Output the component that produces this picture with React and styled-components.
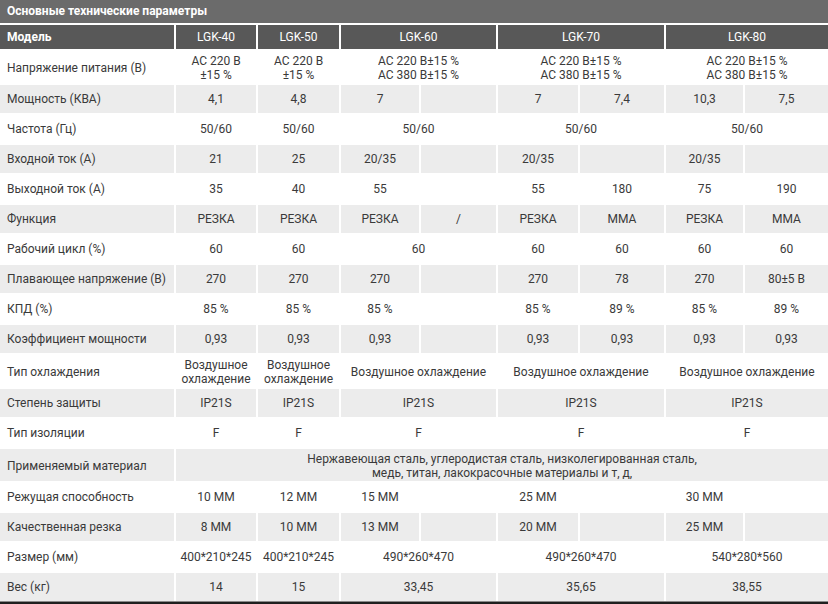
import React from "react";
import styled, { createGlobalStyle } from "styled-components";

const GlobalStyle = createGlobalStyle`
  html, body {
    margin: 0;
    padding: 0;
    background: #ffffff;
  }
  body {
    font-family: Roboto, "Noto Sans", "Liberation Sans", sans-serif;
  }
`;

// column widths: label, LGK-40, LGK-50, LGK-60 (a, b), LGK-70 (a, b), LGK-80 (a, b)
const COLS = [174, 80, 81, 78, 75, 80, 84, 77, 83];

const AC2 = ["AC 220 В±15 %", "AC 380 В±15 %"];

const rows = [
  ["Напряжение питания (В)", [[["AC 220 В", "±15 %"]], [["AC 220 В", "±15 %"]], [AC2, 2], [AC2, 2], [AC2, 2]]],
  ["Мощность (КВА)", [["4,1"], ["4,8"], ["7"], [""], ["7"], ["7,4"], ["10,3"], ["7,5"]]],
  ["Частота (Гц)", [["50/60"], ["50/60"], ["50/60", 2], ["50/60", 2], ["50/60", 2]]],
  ["Входной ток (А)", [["21"], ["25"], ["20/35"], [""], ["20/35"], [""], ["20/35"], [""]]],
  ["Выходной ток (А)", [["35"], ["40"], ["55"], [""], ["55"], ["180"], ["75"], ["190"]]],
  ["Функция", [["РЕЗКА"], ["РЕЗКА"], ["РЕЗКА"], ["/"], ["РЕЗКА"], ["ММА"], ["РЕЗКА"], ["ММА"]]],
  ["Рабочий цикл (%)", [["60"], ["60"], ["60", 2], ["60"], ["60"], ["60"], ["60"]]],
  ["Плавающее напряжение (В)", [["270"], ["270"], ["270"], [""], ["270"], ["78"], ["270"], ["80±5 В"]]],
  ["КПД (%)", [["85 %"], ["85 %"], ["85 %"], [""], ["85 %"], ["89 %"], ["85 %"], ["89 %"]]],
  ["Коэффициент мощности", [["0,93"], ["0,93"], ["0,93"], [""], ["0,93"], ["0,93"], ["0,93"], ["0,93"]]],
  ["Тип охлаждения", [[["Воздушное", "охлаждение"]], [["Воздушное", "охлаждение"]], ["Воздушное охлаждение", 2], ["Воздушное охлаждение", 2], ["Воздушное охлаждение", 2]]],
  ["Степень защиты", [["IP21S"], ["IP21S"], ["IP21S", 2], ["IP21S", 2], ["IP21S", 2]]],
  ["Тип изоляции", [["F"], ["F"], ["F", 2], ["F", 2], ["F", 2]]],
  ["Применяемый материал", [[["Нержавеющая сталь, углеродистая сталь, низколегированная сталь,", "медь, титан, лакокрасочные материалы и т, д,"], 8]]],
  ["Режущая способность", [["10 ММ"], ["12 ММ"], ["15 ММ"], [""], ["25 ММ"], [""], ["30 ММ"], [""]]],
  ["Качественная резка", [["8 ММ"], ["10 ММ"], ["13 ММ"], [""], ["20 ММ"], [""], ["25 ММ"], [""]]],
  ["Размер (мм)", [["400*210*245"], ["400*210*245"], ["490*260*470", 2], ["490*260*470", 2], ["540*280*560", 2]]],
  ["Вес (кг)", [["14"], ["15"], ["33,45", 2], ["35,65", 2], ["38,55", 2]]],
];

const Page = styled.div`
  display: flex;
  flex-direction: column;
  height: 100vh;
  overflow: hidden;
`;

const Title = styled.div`
  height: 23px;
  line-height: 23px;
  padding-left: 7px;
  background: #6b6b6b;
  color: #ffffff;
  font-size: 12px;
  font-weight: 700;
  margin-bottom: 2px;
`;

const Clip = styled.div`
  overflow: hidden;
`;

const Table = styled.table`
  width: calc(100% + 4px);
  margin: -2px;
  table-layout: fixed;
  border-collapse: separate;
  border-spacing: 2px;
  color: #3a3a3a;
  font-size: 12px;
  line-height: 14px;
`;

const HeadCell = styled.th`
  height: 24px;
  padding: 0 6px;
  background: #585858;
  color: #ffffff;
  font-weight: ${(p) => (p.$label ? 700 : 400)};
  text-align: ${(p) => (p.$label ? "left" : "center")};
  padding-left: ${(p) => (p.$label ? "7px" : "6px")};
`;

const Row = styled.tr`
  height: 28px;
`;

const Cell = styled.td`
  padding: ${(p) => (p.$tall ? "3px 4px 1px" : "2px 4px")};
  background: ${(p) => (p.$shade ? "#ececec" : "#ffffff")};
  text-align: ${(p) => (p.$label ? "left" : "center")};
  padding-left: ${(p) => (p.$label ? "7px" : "4px")};
  vertical-align: middle;
  white-space: nowrap;
`;

const Foot = styled.div`
  flex: 1;
  background: #1f1f1f;
  border-top: 1px solid #8a8a8a;
`;

const Lines = ({ text }) =>
  Array.isArray(text)
    ? text.map((line, i) => (
        <React.Fragment key={i}>
          {i > 0 && <br />}
          {line}
        </React.Fragment>
      ))
    : text;

export default function App() {
  return (
    <Page>
      <GlobalStyle />
      <Title>Основные технические параметры</Title>
      <Clip>
        <Table>
          <colgroup>
            {COLS.map((w, i) => (
              <col key={i} style={{ width: w }} />
            ))}
          </colgroup>
          <thead>
            <tr>
              <HeadCell $label>Модель</HeadCell>
              <HeadCell>LGK-40</HeadCell>
              <HeadCell>LGK-50</HeadCell>
              <HeadCell colSpan={2}>LGK-60</HeadCell>
              <HeadCell colSpan={2}>LGK-70</HeadCell>
              <HeadCell colSpan={2}>LGK-80</HeadCell>
            </tr>
          </thead>
          <tbody>
            {rows.map(([label, cells], r) => {
              const shade = r % 2 === 1;
              const tall = cells.some(([t]) => Array.isArray(t));
              return (
                <Row key={label}>
                  <Cell $label $shade={shade} $tall={tall}>{label}</Cell>
                  {cells.map(([text, span], c) => (
                    <Cell key={c} colSpan={span || 1} $shade={shade} $tall={tall}>
                      <Lines text={text} />
                    </Cell>
                  ))}
                </Row>
              );
            })}
          </tbody>
        </Table>
      </Clip>
      <Foot />
    </Page>
  );
}
